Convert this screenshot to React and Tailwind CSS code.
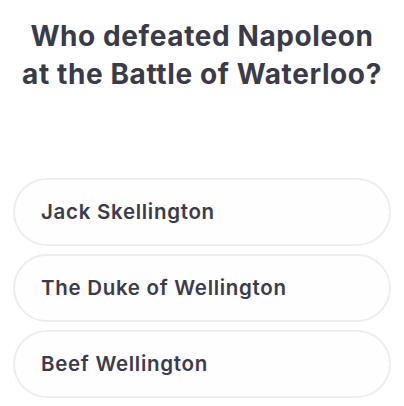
import React from 'react';

const answers = ['Jack Skellington', 'The Duke of Wellington', 'Beef Wellington'];

export default function App() {
  return (
    <div
      className="w-[404px] h-[406px] bg-white overflow-hidden flex flex-col"
      style={{ fontFamily: 'Inter, "Noto Sans", sans-serif' }}
    >
      <h1 className="pt-[17px] px-[16px] text-center text-[28px] leading-[38px] font-bold text-[#3a3a48] tracking-[0.6px]">
        Who defeated Napoleon at the Battle of Waterloo?
      </h1>
      <div className="mt-auto mb-[8px] mx-[13px] flex flex-col gap-2">
        {answers.map((a) => (
          <button
            key={a}
            className="h-[68px] w-full rounded-full border-2 border-[#ededf0] bg-[#fefefe] pl-[26px] pr-4 text-left text-[20.5px] font-semibold text-[#3c3b4a] tracking-[0.7px]"
          >
            {a}
          </button>
        ))}
      </div>
    </div>
  );
}
